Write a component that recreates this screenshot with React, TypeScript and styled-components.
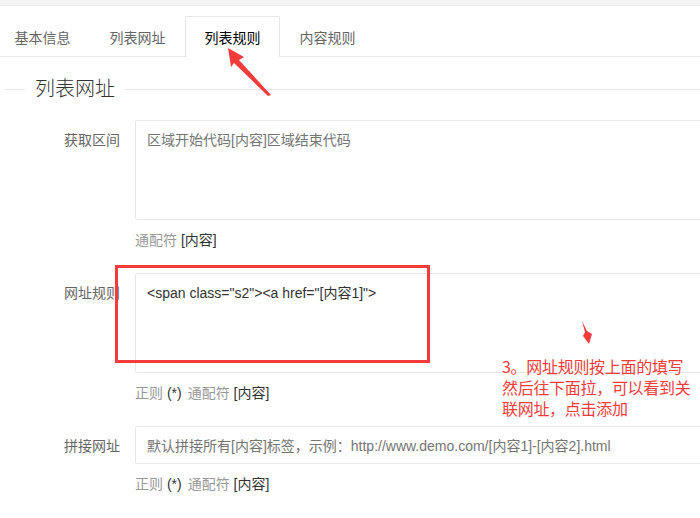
import React, { FC } from 'react';
import styled, { createGlobalStyle } from 'styled-components';

const GlobalStyle = createGlobalStyle`
  html, body {
    margin: 0;
    padding: 0;
    background: #fff;
    overflow: hidden;
  }
  body {
    font-family: "Liberation Sans", "Noto Sans CJK SC", sans-serif;
    color: #333;
  }
`;

const Page = styled.div`
  position: relative;
  width: 700px;
  height: 518px;
  overflow: hidden;
`;

const TopStrip = styled.div`
  height: 5px;
  background: #f4f4f4;
  border-bottom: 1px solid #e8e8e8;
`;

const TabBar = styled.ul`
  display: flex;
  margin: 10px 0 0 -5px;
  padding: 0;
  list-style: none;
  height: 40px;
  border-bottom: 1px solid #e6e6e6;
`;

const Tab = styled.li<{ $active?: boolean }>`
  width: 95px;
  box-sizing: border-box;
  display: flex;
  align-items: center;
  justify-content: center;
  font-size: 14px;
  color: ${(p) => (p.$active ? '#000' : '#666')};
  background: #fff;
  border: 1px solid ${(p) => (p.$active ? '#e6e6e6' : 'transparent')};
  border-bottom: none;
  border-radius: 2px 2px 0 0;
  height: ${(p) => (p.$active ? '41px' : '40px')};
  padding-bottom: ${(p) => (p.$active ? '1px' : '0')};
`;

const Fieldset = styled.fieldset`
  margin: 21px 0 0 5px;
  padding: 0;
  border: none;
  border-top: 1px solid #e6e6e6;
`;

const Legend = styled.legend`
  margin-left: 20px;
  padding: 0 10px;
  font-size: 20px;
  font-weight: 300;
  color: #333;
  line-height: 22px;
`;

const Form = styled.div`
  display: flex;
  flex-direction: column;
  gap: 23px;
  padding-top: 20px;
`;

const Item = styled.div`
  display: grid;
  grid-template-columns: 115px 700px;
  column-gap: 15px;
`;

const Label = styled.label`
  text-align: right;
  font-size: 14px;
  color: #666;
  line-height: 20px;
  padding-top: 10px;
`;

const Field = styled.div`
  display: flex;
  flex-direction: column;
`;

const TextArea = styled.div<{ $filled?: boolean; $single?: boolean }>`
  box-sizing: border-box;
  height: ${(p) => (p.$single ? '38px' : '100px')};
  padding: 9px 11px;
  border: 1px solid #e6e6e6;
  border-radius: 2px;
  font-size: 14px;
  line-height: 20px;
  color: ${(p) => (p.$filled ? '#333' : '#757575')};
  white-space: nowrap;
`;

const Hint = styled.div`
  margin-top: 10px;
  font-size: 14px;
  line-height: 20px;
  color: #333;
`;

const Muted = styled.span`
  color: #999;
`;

const Gap = styled.span`
  display: inline-block;
  width: 6px;
`;

const RedBox = styled.div`
  position: absolute;
  left: 115px;
  top: 265px;
  width: 315px;
  height: 98px;
  box-sizing: border-box;
  border: 3px solid #f23c3c;
`;

const Note = styled.div`
  position: absolute;
  left: 502px;
  top: 356px;
  width: 200px;
  font-family: "Noto Sans CJK SC", sans-serif;
  font-size: 16px;
  line-height: 21px;
  color: #f23c3c;
  letter-spacing: -0.3px;
`;

const Overlay = styled.svg`
  position: absolute;
  left: 0;
  top: 0;
  pointer-events: none;
`;

const RegexHint: FC = () => (
  <Hint>
    <Muted>正则</Muted> (*)
    <Gap />
    <Muted>通配符</Muted> [内容]
  </Hint>
);

const App: FC = () => (
  <Page>
    <GlobalStyle />
    <TopStrip />
    <TabBar>
      <Tab>基本信息</Tab>
      <Tab>列表网址</Tab>
      <Tab $active>列表规则</Tab>
      <Tab>内容规则</Tab>
    </TabBar>
    <Fieldset>
      <Legend>列表网址</Legend>
      <Form>
        <Item>
          <Label>获取区间</Label>
          <Field>
            <TextArea>区域开始代码[内容]区域结束代码</TextArea>
            <Hint>
              <Muted>通配符</Muted> [内容]
            </Hint>
          </Field>
        </Item>
        <Item>
          <Label>网址规则</Label>
          <Field>
            <TextArea $filled>{'<span class="s2"><a href="[内容1]">'}</TextArea>
            <RegexHint />
          </Field>
        </Item>
        <Item>
          <Label>拼接网址</Label>
          <Field>
            <TextArea $single>
              默认拼接所有[内容]标签，示例：http://www.demo.com/[内容1]-[内容2].html
            </TextArea>
            <RegexHint />
          </Field>
        </Item>
      </Form>
    </Fieldset>

    <RedBox />
    <Overlay width="700" height="518" viewBox="0 0 700 518">
      <polygon
        points="228,48 244,57 239,60 271,95 268,96 234,63 231,67"
        fill="#f23c3c"
      />
      <polygon points="582,321 587,331 592,334 589,344 583,336 585,332" fill="#f23c3c" />
    </Overlay>
    <Note>
      3。网址规则按上面的填写
      <br />
      然后往下面拉，可以看到关
      <br />
      联网址，点击添加
    </Note>
  </Page>
);

export default App;
